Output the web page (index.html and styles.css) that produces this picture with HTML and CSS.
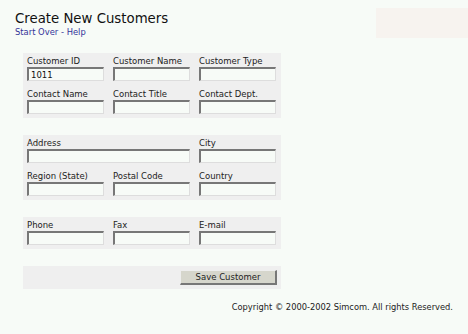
FILE: index.html
```html
<!DOCTYPE html>
<html>
<head>
  <title>Create New Customers</title>
  <link rel="stylesheet" href="styles.css">
</head>
<body>
<div class="header">
  <div class="heading">
    <h1>Create New Customers</h1>
    <div class="links"><a href="#">Start Over</a> - <a href="#">Help</a></div>
  </div>
  <div class="corner"></div>
</div>

<form id="customer-form" class="main">
  <div class="panel">
    <div class="field">
      <label for="id">Customer ID</label>
      <input type="text" id="id" name="id" value="1011">
    </div>
    <div class="field">
      <label for="name">Customer Name</label>
      <input type="text" id="name" name="name">
    </div>
    <div class="field">
      <label for="ctype">Customer Type</label>
      <input type="text" id="ctype" name="ctype">
    </div>
    <div class="field">
      <label for="cname">Contact Name</label>
      <input type="text" id="cname" name="cname">
    </div>
    <div class="field">
      <label for="ctitle">Contact Title</label>
      <input type="text" id="ctitle" name="ctitle">
    </div>
    <div class="field">
      <label for="cdept">Contact Dept.</label>
      <input type="text" id="cdept" name="cdept">
    </div>
  </div>

  <div class="panel">
    <div class="field wide">
      <label for="address">Address</label>
      <input type="text" id="address" name="address">
    </div>
    <div class="field">
      <label for="city">City</label>
      <input type="text" id="city" name="city">
    </div>
    <div class="field">
      <label for="region">Region (State)</label>
      <input type="text" id="region" name="region">
    </div>
    <div class="field">
      <label for="postal">Postal Code</label>
      <input type="text" id="postal" name="postal">
    </div>
    <div class="field">
      <label for="country">Country</label>
      <input type="text" id="country" name="country">
    </div>
  </div>

  <div class="panel">
    <div class="field">
      <label for="phone">Phone</label>
      <input type="text" id="phone" name="phone">
    </div>
    <div class="field">
      <label for="fax">Fax</label>
      <input type="text" id="fax" name="fax">
    </div>
    <div class="field">
      <label for="email">E-mail</label>
      <input type="text" id="email" name="email">
    </div>
  </div>

  <div class="panel buttons">
    <button type="submit">Save Customer</button>
  </div>
</form>

<div class="footer">Copyright &copy; 2000-2002 Simcom. All rights Reserved.</div>
</body>
</html>
```

FILE: styles.css
```css
body {
  font-family: "DejaVu Sans", Verdana, sans-serif;
  font-size: 8.5px;
  color: #222;
  background: #f7fbf7;
  margin: 0;
  padding: 0;
}
.header {
  display: flex;
  justify-content: space-between;
  padding: 8px 0 0 15px;
}
h1 {
  font-size: 13.3px;
  font-weight: normal;
  color: #111;
  margin: 3px 0 0 0;
  line-height: 16px;
}
.links {
  font-size: 8.4px;
  line-height: 10px;
  color: #333399;
}
.links a {
  color: #333399;
  text-decoration: none;
}
.corner {
  width: 92px;
  height: 30px;
  background: #f7f3ef;
}
.main {
  width: 258px;
  margin: 15px 0 0 23px;
}
.panel {
  display: grid;
  grid-template-columns: 77px 77px 77px;
  column-gap: 9px;
  row-gap: 8px;
  padding: 3px 5px 4px 4px;
  background: #efefef;
  margin-bottom: 17px;
}
.field {
  display: flex;
  flex-direction: column;
}
.field.wide {
  grid-column: span 2;
}
label {
  line-height: 11px;
  height: 11px;
}
input {
  box-sizing: border-box;
  height: 14px;
  width: 100%;
  margin: 0;
  padding: 0 2px;
  font-family: "DejaVu Sans", Verdana, sans-serif;
  font-size: 8.5px;
  color: #111;
  background: #f7fbf7;
  border: 1px solid #ddd;
  border-top: 2px solid #777;
  border-left: 2px solid #777;
  outline: none;
}
.buttons {
  display: flex;
  justify-content: flex-end;
  padding: 4px;
  margin-bottom: 12px;
}
button {
  box-sizing: border-box;
  width: 97px;
  height: 15px;
  padding: 0;
  font-family: "DejaVu Sans", Verdana, sans-serif;
  font-size: 8.5px;
  color: #222;
  background: #d6d6cc;
  border: 1px solid #eee;
  border-right: 2px solid #777;
  border-bottom: 2px solid #777;
}
.footer {
  text-align: right;
  padding: 0 15px 0 0;
  font-size: 8.3px;
  line-height: 12px;
  color: #222;
}
```
